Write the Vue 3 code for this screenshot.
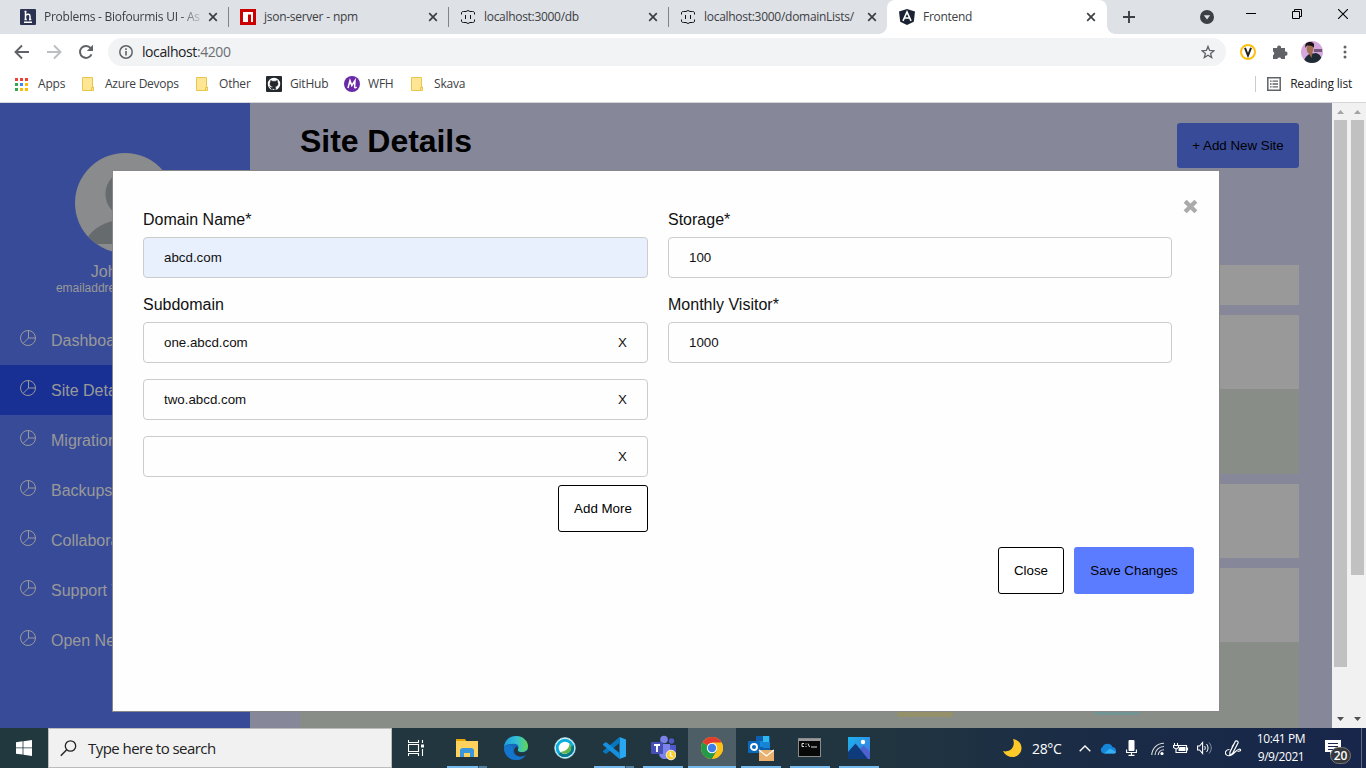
<script setup>
const tabs = [
  { icon: 'h', title: 'Problems - Biofourmis UI - As', fade: true, cls: 't1' },
  { icon: 'npm', title: 'json-server - npm', cls: 't2' },
  { icon: 'json', title: 'localhost:3000/db', cls: 't3' },
  { icon: 'json', title: 'localhost:3000/domainLists/', cls: 't4' },
  { icon: 'ng', title: 'Frontend', active: true, cls: 't5' },
]
const bookmarks = [
  { icon: 'folder', label: 'Azure Devops', cls: 'b1' },
  { icon: 'folder', label: 'Other', cls: 'b2' },
  { icon: 'github', label: 'GitHub', cls: 'b3' },
  { icon: 'wfh', label: 'WFH', cls: 'b4' },
  { icon: 'folder', label: 'Skava', cls: 'b5' },
]
const appColors = ['#ea4335', '#ea4335', '#ea4335', '#34a853', '#4285f4', '#fbbc04', '#34a853', '#fbbc04', '#fbbc04']
const menu = ['Dashboard', 'Site Details', 'Migrations', 'Backups', 'Collaborators', 'Support Tickets', 'Open New']
const subdomains = ['one.abcd.com', 'two.abcd.com', '']
const apps = [
  { id: 'explorer', run: 'multi' },
  { id: 'edge' },
  { id: 'webex' },
  { id: 'code', run: 'multi' },
  { id: 'teams', run: 'one' },
  { id: 'chrome', run: 'active' },
  { id: 'outlook', run: 'one' },
  { id: 'cmd', run: 'one' },
  { id: 'photos', run: 'one' },
]
</script>

<template>
  <div class="screen">
    <header class="tabstrip">
      <div v-for="(t, i) in tabs" :key="i" class="tab" :class="[t.cls, { active: t.active, sep: i < 3 }]">
        <svg v-if="t.icon === 'h'" class="fav" viewBox="0 0 16 16">
          <rect width="16" height="16" rx="1" fill="#2c3252" />
          <path d="M4.500 2.500h2M5.500 2.500v8M4.500 10.500h2.300M5.500 6.500c2-1.800 4.500-1.500 4.500.8v3.200M9 10.500h2.300M4 13.300h8" stroke="#fff" stroke-width="1.500" fill="none" />
        </svg>
        <svg v-else-if="t.icon === 'npm'" class="fav" viewBox="0 0 16 16">
          <rect width="16" height="16" fill="#c00" />
          <path d="M3 3h10v10h-2V5.500H8V13H3z" fill="#fff" />
        </svg>
        <svg v-else-if="t.icon === 'json'" class="fav" viewBox="0 0 16 16">
          <path d="M1.500 5.500V4c0-1 .7-1.500 2-1.500H6L8 1.500l2 1h2.500c1.300 0 2 .5 2 1.500v1.500M1.500 10.500V12c0 1 .7 1.500 2 1.500H6l2 1 2-1h2.500c1.300 0 2-.5 2-1.500v-1.500M5.500 6v4M10.500 6v4" stroke="#111" fill="none" />
        </svg>
        <svg v-else class="fav" viewBox="0 0 16 16">
          <path d="M8 0l8 2.500-1.200 10.300L8 16l-6.800-3.200L0 2.500z" fill="#1b2332" />
          <path d="M4 11.800L8 3l4 8.800M5.500 9h5" stroke="#fff" stroke-width="1.600" fill="none" />
        </svg>
        <span class="tab-title" :class="{ fade: t.fade }">{{ t.title }}</span>
        <svg class="tab-x" viewBox="0 0 10 10"><path d="M1.200 1.200l7.600 7.600M8.800 1.200L1.200 8.800" stroke="#3c4043" stroke-width="1.700" /></svg>
      </div>
      <svg class="plus" viewBox="0 0 12 12"><path d="M6 0v12M0 6h12" stroke="#3c4043" stroke-width="1.900" /></svg>
      <div class="window-controls">
        <svg width="14" height="14" viewBox="0 0 14 14"><circle cx="7" cy="7" r="7" fill="#3c4043" /><path d="M3.800 5.300h6.400L7 9.500z" fill="#dee1e6" /></svg>
        <svg width="10" height="10" viewBox="0 0 10 10"><path d="M0 4.500h10" stroke="#000" /></svg>
        <svg width="10" height="10" viewBox="0 0 10 10"><path d="M.5 2.500h7v7h-7zM2.500 2.500v-2h7v7h-2" fill="none" stroke="#000" /></svg>
        <svg width="10" height="10" viewBox="0 0 10 10"><path d="M0 0l10 10M10 0L0 10" stroke="#000" stroke-width="1.100" /></svg>
      </div>
    </header>

    <div class="toolbar">
      <svg class="nav" viewBox="0 0 16 16"><path d="M15 8H2M8 1.500L1.500 8 8 14.500" fill="none" stroke="#5f6368" stroke-width="1.900" /></svg>
      <svg class="nav" viewBox="0 0 16 16"><path d="M1 8h13M8 1.500L14.500 8 8 14.500" fill="none" stroke="#bcbec1" stroke-width="1.900" /></svg>
      <svg class="nav" viewBox="0 0 16 16"><path d="M13.500 10.300A6 6 0 1 1 12.700 4.200" fill="none" stroke="#5f6368" stroke-width="2" /><path d="M15 .8v6.200H8.800z" fill="#5f6368" /></svg>
      <div class="omnibox">
        <svg width="14" height="14" viewBox="0 0 14 14"><circle cx="7" cy="7" r="6.200" fill="none" stroke="#5f6368" stroke-width="1.500" /><path d="M7 6v4.500M7 3.300v1.600" stroke="#5f6368" stroke-width="1.600" /></svg>
        <span class="url">localhost<span class="port">:4200</span></span>
        <svg width="14" height="14" viewBox="0 0 14 14"><path d="M7 1.400l1.600 4 4.300.3-3.300 2.700 1.100 4.200L7 10.300l-3.700 2.300 1.100-4.200L1.100 5.700l4.300-.3z" fill="none" stroke="#5f6368" stroke-width="1.300" /></svg>
      </div>
      <svg class="ext-v" viewBox="0 0 16 16"><circle cx="8" cy="8" r="7" fill="#fff" stroke="#fdbf14" stroke-width="2" /><path d="M5 3.800L8 11.500 11 3.800" fill="none" stroke="#222" stroke-width="2" /></svg>
      <svg class="puzzle" viewBox="0 0 16 16"><path d="M1 4h4.200a2 2 0 1 1 3.800 0h4v3.600a2.100 2.100 0 1 1 0 4.100V15H9.300a2.100 2.100 0 0 0-4 0H1v-3.800a2 2 0 0 0 0-3.700z" fill="#5f6368" /></svg>
      <svg class="profile" viewBox="0 0 22 22">
        <defs><clipPath id="profile-clip"><circle cx="11" cy="11" r="11" /></clipPath></defs>
        <g clip-path="url(#profile-clip)">
          <rect width="22" height="22" fill="#d5a7dc" /><path d="M13 8h8v3h-8z" fill="#75577e" />
          <path d="M2 22c1-3 3-8 7-9l6-1c4 1 6 4 6 10z" fill="#1e2b35" />
          <ellipse cx="9" cy="8" rx="3.300" ry="5" fill="#a26e50" />
          <path d="M4.500 7c-1-4 1-6 4.500-6 3.500 0 5 2 3.600 6-1-2.500-5-3-7-2z" fill="#191517" />
          <path d="M8 12.500l2.500 4.500 1-5z" fill="#9b674c" />
        </g>
      </svg>
      <svg class="kebab" viewBox="0 0 4 14"><circle cx="2" cy="2" r="1.500" /><circle cx="2" cy="7" r="1.500" /><circle cx="2" cy="12" r="1.500" /></svg>
    </div>

    <div class="bookmarks">
      <div class="bm apps">
        <svg width="13" height="13" viewBox="0 0 13 13"><rect v-for="(c, i) in appColors" :key="i" :x="(i % 3) * 5" :y="Math.floor(i / 3) * 5" width="3" height="3" :fill="c" /></svg>
        <span>Apps</span>
      </div>
      <div v-for="b in bookmarks" :key="b.label" class="bm" :class="b.cls">
        <svg v-if="b.icon === 'folder'" class="bicon" viewBox="0 0 16 16"><path d="M1.500 1.500h10v9.500h1v3.500h-11z" fill="#ffe694" stroke="#e8c64d" /><path d="M10.500 14.500V11.500h2" fill="none" stroke="#e8c64d" /></svg>
        <svg v-else-if="b.icon === 'github'" class="bicon" viewBox="0 0 16 16"><rect width="16" height="16" rx="1" fill="#24292e" /><path d="M6.300 14v-2.400C4.500 12 4 10.500 3.200 10.200M6.300 14c-2.600-.8-4.500-3-4.500-6A6.200 6.200 0 0 1 8 1.800 6.200 6.200 0 0 1 14.200 8c0 3-1.900 5.200-4.500 6z" fill="#fff" /><path d="M6.300 14v-2.400c-1.300.3-2-.1-2.500-1M6.300 12.300c0-.8.100-1.100.5-1.500-2.900-.4-3.500-3-2.300-4.700-.2-.7-.1-1.300.1-1.700.8 0 1.500.4 2 .8h2.800c.5-.4 1.200-.8 2-.8.2.500.3 1 .1 1.700 1.200 1.700.6 4.300-2.300 4.700.4.400.5.800.5 1.500V14z" fill="#24292e" stroke="#24292e" stroke-width=".4" /></svg>
        <svg v-else class="bicon" viewBox="0 0 16 16"><circle cx="8" cy="8" r="8" fill="#6a2aa8" /><path d="M4 12l2-7.500 1.800 5L11 4.500 10.600 11c0 1 1 1 2 0" fill="none" stroke="#fff" stroke-width="1.500" /></svg>
        <span>{{ b.label }}</span>
      </div>
      <div class="reading">
        <svg width="14" height="14" viewBox="0 0 14 14"><path d="M.8.8h12.400v12.400H.8z" fill="none" stroke="#5f6368" stroke-width="1.500" /><path d="M3 4.200h1.600M5.500 4.200H11M3 7h1.600M5.500 7H11M3 9.800h1.600M5.500 9.800H11" stroke="#5f6368" stroke-width="1.300" /></svg>
        <span>Reading list</span>
      </div>
    </div>

    <div class="page">
      <aside>
        <svg class="avatar" viewBox="0 0 100 100">
          <defs><clipPath id="avatar-clip"><circle cx="50" cy="50" r="50" /></clipPath></defs>
          <g clip-path="url(#avatar-clip)"><rect width="100" height="100" fill="#8a8b8c" /><ellipse cx="50" cy="41" rx="19.500" ry="22" fill="#666b6e" /><path d="M12 86c5-10 17-18 38-20 21 2 33 10 38 20l-3 5H15z" fill="#666b6e" /></g>
        </svg>
        <div class="user">John Doe</div>
        <div class="email">emailaddress@gmail.com</div>
        <nav>
          <div v-for="(m, i) in menu" :key="m" class="item" :class="{ selected: i === 1 }">
            <svg width="16" height="16" viewBox="0 0 16 16"><circle cx="8" cy="8" r="7.500" /><path d="M8.500.5v7.500H15.500M8.500 8L3 13.500" /></svg>
            <span>{{ m }}</span>
          </div>
        </nav>
      </aside>
      <main>
        <div class="heading"><h1>Site Details</h1><button class="add-site">+ Add New Site</button></div>
        <div class="card head"></div>
        <div class="card"></div><div class="detail"></div>
        <div class="card gap"></div>
        <div class="card gap"></div>
        <div class="detail last"><i class="pill yellow"></i><i class="pill teal"></i></div>
      </main>
      <div v-for="n in 2" :key="n" class="scroll" :class="'s' + n">
        <svg width="7" height="4" viewBox="0 0 7 4"><path d="M0 4L3.500 0 7 4z" fill="#a3a3a3" /></svg>
        <div class="thumb"></div>
        <svg width="7" height="4" viewBox="0 0 7 4"><path d="M0 0h7L3.500 4z" fill="#505050" /></svg>
      </div>

      <div class="modal">
        <svg class="dismiss" viewBox="0 0 14 14"><path d="M2 2l10 10M12 2L2 12" stroke="#aaa" stroke-width="4" /></svg>
        <div class="form">
          <div class="col">
            <label>Domain Name*</label>
            <div class="field filled">abcd.com</div>
            <label>Subdomain</label>
            <div v-for="(s, i) in subdomains" :key="i" class="field"><span>{{ s }}</span><span>X</span></div>
            <button class="outline more">Add More</button>
          </div>
          <div class="col">
            <label>Storage*</label>
            <div class="field">100</div>
            <label>Monthly Visitor*</label>
            <div class="field">1000</div>
          </div>
        </div>
        <div class="actions"><button class="outline close">Close</button><button class="save">Save Changes</button></div>
      </div>
    </div>

    <footer class="taskbar">
      <div class="start"><svg width="16" height="16" viewBox="0 0 16 16"><path d="M0 2.200L6.600 1.300v6.200H0zM7.400 1.200L16 0v7.500H7.400zM0 8.300h6.600v6.300L0 13.800zM7.400 8.300H16V16l-8.600-1.200z" fill="#fff" /></svg></div>
      <div class="search"><svg width="17" height="17" viewBox="0 0 17 17"><circle cx="10.500" cy="6" r="5.200" fill="none" stroke="#222" stroke-width="1.300" /><path d="M6.700 9.700L.8 15.800" stroke="#222" stroke-width="1.400" /></svg><span>Type here to search</span></div>
      <div class="taskview"><svg width="16" height="16" viewBox="0 0 16 16"><path d="M.5 0v2.500h10V0M.5 16v-2.500h10V16M.5 4.500h10v7H.5zM14.500 0v3M14.500 9v7" fill="none" stroke="#fff" stroke-width="1.100" /><rect x="13" y="4.500" width="3" height="3" fill="#fff" /></svg></div>
      <div class="app-list">
        <div v-for="a in apps" :key="a.id" class="app" :class="a.run">
          <svg v-if="a.id === 'explorer'" width="24" height="24" viewBox="0 0 24 24"><path d="M1 3h9l2 3H1z" fill="#e5a50a" /><path d="M1 5h22v16H1z" fill="#ffd25e" /><path d="M5 21v-7.500l2-1.500h10l2 1.500V21h-4v-4H9v4z" fill="#3a96dd" /></svg>
          <svg v-else-if="a.id === 'edge'" width="26" height="26" viewBox="0 0 26 26">
            <defs><linearGradient id="edge-top"><stop offset="0" stop-color="#1b9de2" /><stop offset=".55" stop-color="#35c1d1" /><stop offset="1" stop-color="#62d84e" /></linearGradient></defs>
            <circle cx="13" cy="13" r="12" fill="#1668b8" /><path d="M1 12C1.500 5 7 1 13 1c7 0 12 5 12 10 0 4-3 6-6 6-3 0-5-1-4-3 2-4-2-6-6-5-4 0-7 1-8 3z" fill="url(#edge-top)" />
            <path d="M15 14c-1 2 1 3.500 4 3.300 2 0 4-.8 6-2.300l1 5-3 1c-5 2-12 0-12-5 0-2 1-3.500 2.500-4.500 1.500.5 2 1.500 1.500 2.500z" fill="#22363f" /><path d="M10.500 12C8 17 11 23 19 21.500c1.500-.3 2.500-.7 4-1.500-2 3-6 5-10 5C5 25 1 18 1 13c1-3 6-4 9.500-1z" fill="#1475cf" />
          </svg>
          <svg v-else-if="a.id === 'webex'" width="22" height="22" viewBox="0 0 22 22"><circle cx="11" cy="11" r="10.400" fill="#fff" stroke="#8ccbd9" stroke-width=".8" /><circle cx="11" cy="11" r="7.800" fill="none" stroke="#09aede" stroke-width="3" /><path d="M18.500 9A8 8 0 0 1 5.500 16.500" fill="none" stroke="#08778a" stroke-width="3" /><path d="M15.500 6c0 5-3 8-9 9 3 3 8 2 10-1 1.500-3 1-6-1-8z" fill="#62b64b" /></svg>
          <svg v-else-if="a.id === 'code'" width="24" height="24" viewBox="0 0 24 24"><path d="M17.500 1L24 3.500v17L17.500 23z" fill="#29a8f2" /><path d="M17.500 1v6L4 18l-3-2v-1z" fill="#0877bd" /><path d="M17.500 23v-6L4 6 1 8v1z" fill="#1490df" /></svg>
          <svg v-else-if="a.id === 'teams'" width="26" height="26" viewBox="0 0 26 26"><circle cx="21.500" cy="6" r="2.700" fill="#5059c9" /><circle cx="14" cy="4.500" r="3.800" fill="#7b83eb" /><path d="M9 9h11v9c0 8-11 8-11 0z" fill="#7b83eb" /><path d="M20 10h6v7c0 4-3 5-6 4z" fill="#5059c9" /><rect x="1" y="7" width="12" height="12" rx="1" fill="#464eb8" /><path d="M4 10h6M7 10v7" stroke="#fff" stroke-width="1.900" /><circle cx="21" cy="20" r="4.800" fill="#ffcf22" stroke="#eee" /><path d="M20.500 17v3.500l2.300 1.500" stroke="#fff" stroke-width="1.300" fill="none" /></svg>
          <svg v-else-if="a.id === 'chrome'" width="22" height="22" viewBox="0 0 22 22"><circle cx="11" cy="11" r="11" fill="#fbc116" /><path d="M11 11L1.500 5.500A11 11 0 0 1 20.500 5.500z" fill="#e33b2e" /><path d="M1.500 5.500A11 11 0 0 0 11 22l5-8.500L11 11z" fill="#229a47" /><path d="M11 5.500h9.500a11 11 0 0 1 0 11L11 22l5-8.500z" fill="#fbc116" /><circle cx="11" cy="11" r="5.200" fill="#fff" /><circle cx="11" cy="11" r="4.200" fill="#3d7ee8" /></svg>
          <svg v-else-if="a.id === 'outlook'" width="26" height="26" viewBox="0 0 26 26"><rect x="8" y="1" width="14" height="16" rx="1" fill="#0d5fae" /><path d="M8 6h7v6H8z" fill="#1488db" /><path d="M15 1h6v6h-6z" fill="#32b8f0" /><path d="M15 7h7v6h-7z" fill="#1684d2" /><rect x="0" y="6" width="12" height="12" rx="1" fill="#0a69bd" /><circle cx="6" cy="12" r="3" fill="none" stroke="#fff" stroke-width="1.900" /><path d="M11 15h15v11H11z" fill="#eab16c" /><path d="M11 15l7.500 6 7.500-6" fill="none" stroke="#fff" stroke-width="1.300" /></svg>
          <svg v-else-if="a.id === 'cmd'" width="24" height="20" viewBox="0 0 24 20"><rect x=".5" y=".5" width="22" height="18" fill="#080808" stroke="#8b8b8b" /><path d="M1 2h21" stroke="#ccc" stroke-width="1.500" /><path d="M6 5.500H4v3h2M8 5.500v1M8 8v1M10 5.500l1.500 3.500M13 9h6" stroke="#ddd" fill="none" /></svg>
          <svg v-else width="22" height="22" viewBox="0 0 22 22"><defs><linearGradient id="photo" x2="1" y2="1"><stop stop-color="#1bb3ef" /><stop offset="1" stop-color="#4174d9" /></linearGradient></defs><rect width="22" height="22" fill="url(#photo)" /><path d="M12 12l3.500-3.500L22 15v7h-8z" fill="#4d61cf" /><path d="M0 15l7.500-8.500L20 22H0z" fill="#0d3b7c" /><circle cx="15" cy="5" r="2.200" fill="#fff" /></svg>
        </div>
      </div>
      <div class="tray">
        <svg class="moon" viewBox="0 0 19 18"><path d="M10 0c5 1 8.500 4 8.500 9 0 5-4 9-9 9C5.500 18 2 16 0 12c7 2 13-4 10-12z" fill="#ffc929" /></svg>
        <span class="temp">28°C</span>
        <svg class="chev" viewBox="0 0 12 7"><path d="M.7 6.300L6 1l5.300 5.300" fill="none" stroke="#fff" stroke-width="1.400" /></svg>
        <svg class="cloud" viewBox="0 0 17 11"><path d="M4 10.500A3.500 3.500 0 0 1 2.500 4 5.500 5.500 0 0 1 12.500 4a3.400 3.400 0 0 1 1.500 6.500z" fill="#1686d9" /><path d="M4 10.500L10 5.500l6 3.500c-.5 1-1 1.500-2 1.500z" fill="#35b0f2" /></svg>
        <svg class="mic" viewBox="0 0 11 16"><rect x="2.500" width="6" height="11" rx="1" fill="#fff" /><path d="M.6 9.500v3h9.800v-3M5.500 12.500V15M2.500 15.400h6" fill="none" stroke="#fff" stroke-width="1.100" /></svg>
        <svg class="wifi" viewBox="0 0 13 13"><path d="M.8 13A12 12 0 0 1 13 1.200M4 13A9 9 0 0 1 13 4.500M7.200 13A6 6 0 0 1 13 7.700" fill="none" stroke="#ddd" stroke-width="1.100" /><circle cx="11" cy="11.500" r="1.600" fill="#fff" /></svg>
        <svg class="bat" viewBox="0 0 16 11"><path d="M5.500 2.500h8v7h-9M14.500 4.500v3M1.500 0v2M4.500 0v2M.5 2.500h5v2l-2 1.500H3L.5 4.500zM3 6v3.500h3" fill="none" stroke="#fff" stroke-width="1.100" /><path d="M6.500 4h6v4h-7V6z" fill="#fff" /></svg>
        <svg class="vol" viewBox="0 0 16 14"><path d="M.6 5h2l3-3.500v11L2.600 9h-2z" fill="none" stroke="#fff" stroke-width="1.100" /><path d="M7.500 5c1 1 1 3 0 4M9.500 3c2 2.500 2 5.500 0 8" fill="none" stroke="#fff" /><path d="M12 1.500c3 3.500 3 7.500 0 11" fill="none" stroke="#8892a2" /></svg>
        <svg class="pen" viewBox="0 0 17 17"><path d="M10.500 1c1.500-.7 3 .5 2.500 2L7.500 13.500l-2.700 1.700.2-3.200zM8.500 4.500L7 7M4.500 9.500C1 9.500-.5 12.500 1 14.500s5 1.500 7.500-1c2-2 3.500-4 6-4.500 1.500 0 1.500 2 0 2l-2 .5" fill="none" stroke="#fff" stroke-width="1.200" /></svg>
        <div class="clock"><div class="time">10:41 PM</div><div class="date">9/9/2021</div></div>
        <div class="notice"><svg width="16" height="16" viewBox="0 0 16 16"><path d="M0 0h16v12H9l-4 4v-4H0z" fill="#fff" /><path d="M3 3.500h10M3 6.500h10M3 9.500h6" stroke="#19284a" stroke-width="1.100" /></svg><b>20</b></div>
        <i class="edge-line"></i>
      </div>
    </footer>
  </div>
</template>

<style>
body { margin: 0; overflow: hidden; }
</style>

<style scoped>
* { box-sizing: border-box; }
svg { display: block; flex: none; }
.screen { width: 1366px; height: 768px; overflow: hidden; display: flex; flex-direction: column; font-family: "Open Sans", "Noto Sans", sans-serif; font-size: 12px; color: #3c4043; background: #fff; }
.tabstrip { height: 34px; flex: none; background: #dee1e6; display: flex; align-items: center; padding-left: 8px; }
.tab { position: relative; width: 220px; height: 34px; display: flex; align-items: center; padding: 0 10px 0 12px; }
.tab.t4 { width: 219px; }
.tab.t5 { padding-right: 11px; }
.tab.sep::after { content: ""; position: absolute; right: -1px; top: 7px; width: 1px; height: 20px; background: #808488; }
.tab.active { background: #fff; border-radius: 8px 8px 0 0; }
.tab.active::before, .tab.active::after { content: ""; position: absolute; bottom: 0; width: 8px; height: 8px; }
.tab.active::before { left: -8px; background: radial-gradient(circle at 0 0, transparent 7.5px, #fff 8px); }
.tab.active::after { right: -8px; background: radial-gradient(circle at 100% 0, transparent 7.5px, #fff 8px); }
.fav { width: 16px; height: 16px; }
.tab-title { width: 159px; margin-left: 8px; white-space: nowrap; line-height: 18px; }
.tab-title.fade { -webkit-mask-image: linear-gradient(90deg, #000 135px, transparent 162px); mask-image: linear-gradient(90deg, #000 135px, transparent 162px); }
.t1 { letter-spacing: -.26px; }
.t2 { letter-spacing: -.28px; }
.t3 { letter-spacing: -.3px; }
.t4 { letter-spacing: -.28px; }
.t5 { letter-spacing: -.3px; }
.t3, .t2, .t4, .t5 { word-spacing: .3px; }
.tab-x { width: 10px; height: 10px; margin-left: auto; }
.plus { width: 12px; height: 12px; margin-left: 16px; }
.window-controls { display: flex; align-items: center; margin-left: auto; padding-right: 18px; padding-bottom: 6px; }
.window-controls svg:nth-child(1) { margin: 6px 32px 0 0; }
.window-controls svg:nth-child(2) { margin-right: 36px; }
.window-controls svg:nth-child(3) { margin-right: 36px; }
.toolbar { height: 36px; flex: none; display: flex; align-items: center; padding-left: 14px; }
.nav { width: 16px; height: 16px; margin-right: 16px; }
.omnibox { width: 1118px; height: 28px; margin-left: -2px; border-radius: 14px; background: #f1f3f4; display: flex; align-items: center; padding: 0 11px; font-size: 14px; }
.url { flex: 1; margin-left: 9px; margin-top: -1px; color: #202124; letter-spacing: -.42px; }
.port { color: #6b6f73; }
.ext-v { width: 16px; height: 16px; margin-left: 14px; }
.puzzle { width: 16px; height: 16px; margin-left: 16px; }
.profile { width: 22px; height: 22px; margin-left: 13px; }
.kebab { width: 4px; height: 14px; margin-left: 20px; fill: #5f6368; }
.bookmarks { height: 33px; flex: none; border-bottom: 1px solid #d5d6da; display: flex; align-items: center; padding: 0 14px 4px 15px; }
.bm { display: flex; align-items: center; letter-spacing: -.2px; }
.bm span, .reading span { margin-top: -1px; }
.bm.apps { width: 66px; }
.bm.apps span { margin-left: 10px; }
.bicon { width: 16px; height: 16px; margin-right: 8px; }
.b1 { width: 114px; letter-spacing: -.28px; }
.b2 { width: 71px; }
.b3 { width: 78px; }
.b4 { width: 66px; }
.reading { margin-left: auto; height: 16px; border-left: 1px solid #ccc; padding-left: 11px; display: flex; align-items: center; letter-spacing: -.2px; }
.reading span { margin-left: 9px; color: #202124; }
.page { position: relative; height: 625px; flex: none; display: flex; font-family: "Liberation Sans", Arial, sans-serif; }
aside { width: 250px; background: #384b98; color: #999; padding-top: 50px; text-align: center; font-size: 16px; }
.avatar { width: 100px; height: 100px; margin: 0 auto 10px; }
.user { line-height: 18px; }
.email { font-size: 12px; line-height: 14px; }
nav { margin-top: 20px; text-align: left; }
.item { height: 50px; display: flex; align-items: center; padding-left: 20px; }
.item svg { margin-bottom: 4px; fill: none; stroke: #999; }
.item span { margin: 2px 0 0 15px; }
.item.selected { background: #183093; }
main { width: 1082px; background: #868899; padding: 20px 33px 0 50px; overflow: hidden; }
.heading { display: flex; justify-content: space-between; height: 142px; }
h1 { margin: 0; font-size: 32px; line-height: 37px; color: #000; letter-spacing: -.05px; }
button { font: 13.333px "Liberation Sans", Arial, sans-serif; color: #000; border: 0; padding: 0; border-radius: 3px; }
.add-site { width: 122px; height: 45px; background: #384b98; }
.card { height: 74px; background: #999; }
.card.head { height: 40px; margin-bottom: 10px; }
.card.gap { margin-top: 10px; }
.detail { height: 85px; background: #888d88; }
.detail.last { height: 86px; padding-top: 58px; display: flex; }
.pill { height: 17px; border-radius: 3px; }
.yellow { width: 56px; margin-left: 597px; background: #949069; }
.teal { width: 46px; height: 15px; margin-left: 141px; background: #729492; }
.scroll { width: 17px; background: #f1f1f1; display: flex; flex-direction: column; align-items: center; padding: 7px 0 7px; }
.scroll .thumb { width: 13px; background: #c1c1c1; margin: 6px 0 auto; }
.s1 .thumb { height: 547px; }
.s2 .thumb { height: 455px; }
.modal { position: absolute; left: 112px; top: 67px; width: 1108px; height: 542px; background: #fefefe; border: 1px solid #888; padding: 38px 25px 0 30px; color: #111; }
.dismiss { position: absolute; right: 21px; top: 28px; width: 15px; height: 15px; }
.form { display: grid; grid-template-columns: 505px 504px; column-gap: 20px; height: 338px; align-items: start; }
.col { display: flex; flex-direction: column; }
label { display: block; font-size: 16px; line-height: 20px; height: 28px; padding-top: 1px; }
.field { height: 41px; border: 1px solid #ccc; border-radius: 4px; padding: 0 20px; margin-bottom: 16px; font-size: 13.333px; display: flex; align-items: center; justify-content: space-between; }
.field.filled { background: #e8f0fe; }
.outline { height: 47px; background: #fff; border: 1px solid #000; }
.more { width: 90px; align-self: flex-end; margin-top: -8px; }
.actions { display: flex; justify-content: flex-end; gap: 10px; }
.close { width: 66px; }
.save { width: 120px; height: 47px; background: #5c7cff; }
.taskbar { height: 40px; flex: none; display: flex; color: #fff; background: linear-gradient(90deg, #22383f, #22363f 35%, #203540 65%, #1a2b46 80%, #17264a); }
.start, .taskview { width: 48px; display: flex; align-items: center; justify-content: center; }
.search { width: 344px; border: 1px solid #bbb; background: #f1f1f1; display: flex; align-items: center; padding-left: 11px; font-size: 15px; color: #222; letter-spacing: -.55px; }
.search span { margin-left: 11px; }
.app-list { display: flex; gap: 1px; margin-left: 3px; }
.app { width: 48px; display: flex; align-items: center; justify-content: center; position: relative; }
.app.one::after, .app.multi::after, .app.active::after { content: ""; position: absolute; left: 4px; right: 4px; bottom: 0; height: 2px; background: #76b9ed; }
.app.multi::after { background: linear-gradient(90deg, #76b9ed 31px, #30505f 31px 32px, #527f9d 32px); }
.app.active { background: #4e5e66; }
.app.active::after { left: 0; right: 0; }
.tray { margin-left: auto; display: flex; align-items: center; }
.moon { width: 19px; height: 18px; }
.temp { width: 47px; margin-left: 10px; font-size: 14px; letter-spacing: -.35px; }
.chev { width: 12px; height: 7px; }
.cloud { width: 17px; height: 11px; margin-left: 9px; }
.mic { width: 11px; height: 16px; margin-left: 9px; }
.wifi { width: 13px; height: 13px; margin-left: 14px; }
.bat { width: 16px; height: 11px; margin-left: 9px; }
.vol { width: 16px; height: 14px; margin-left: 8px; }
.pen { width: 17px; height: 17px; margin-left: 12px; }
.clock { width: 78px; text-align: center; line-height: 18px; font-size: 12px; letter-spacing: -.42px; }
.notice { position: relative; width: 41px; height: 30px; padding: 7px 0 0 5px; }
.notice b { position: absolute; left: 10px; top: 14px; width: 21px; height: 17px; border-radius: 9px; border: 1px solid #777; background: #35383d; font: 600 12px/15px "Open Sans", sans-serif; text-align: center; }
.edge-line { width: 1px; height: 40px; background: #62697d; margin-right: 4px; }
</style>
